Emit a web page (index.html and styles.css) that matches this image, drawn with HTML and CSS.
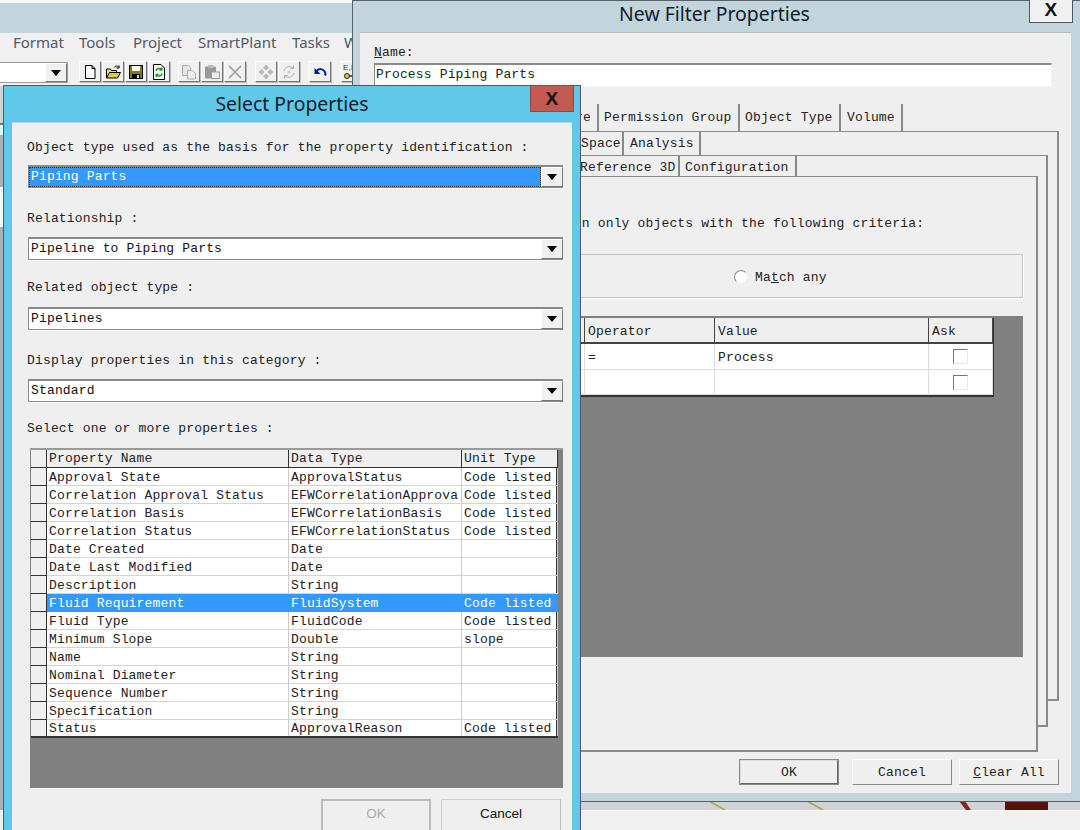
FILE: index.html
```html
<!DOCTYPE html>
<html lang="en">
<head>
<meta charset="utf-8">
<title>Select Properties</title>
<link rel="stylesheet" href="styles.css">
</head>
<body>
<div class="desktop">
  <main class="app">
    <div class="app-title"></div>
    <nav class="menu"><span class="m1">Format</span><span class="m2">Tools</span><span class="m3">Project</span><span class="m4">SmartPlant</span><span class="m5">Tasks</span><span class="m6">Window</span></nav>
    <div class="toolbar">
      <div class="tool-combo"><span class="arrow-btn"><i class="tri"></i></span></div>
      <div class="tool-group g1">
        <span class="tbtn"><svg viewBox="0 0 16 16"><path d="M3.500 1.500h6.500l3 3v10h-9.500z" fill="#fff" stroke="#000"/><path d="M10 1.500v3h3" fill="none" stroke="#000"/></svg></span>
        <span class="tbtn"><svg viewBox="0 0 16 16"><path d="M1.500 14V5h4l1 1.500h5V9" fill="#e8e060" stroke="#000"/><path d="M1.500 14l3-5.500h11l-3 5.500z" fill="#d8d040" stroke="#000"/><path d="M9 3.500c1.500-2 3.500-2 5 0M14 1.500v2.500h-2.500" fill="none" stroke="#000"/></svg></span>
        <span class="tbtn"><svg viewBox="0 0 16 16"><rect x="1.500" y="1.500" width="13" height="13" fill="#7a7a20" stroke="#000"/><rect x="4" y="2" width="8" height="5" fill="#fff"/><rect x="4" y="10" width="8" height="4.500" fill="#000"/><rect x="9" y="11" width="2" height="3" fill="#ddd"/></svg></span>
        <span class="tbtn"><svg viewBox="0 0 16 16"><path d="M2.500 .5h7.500l3.500 3.500v11.500h-11z" fill="#fff" stroke="#000"/><path d="M5 7a3.200 3.200 0 0 1 5.500-1.500M10.800 3.500v2.500h-2.500M11 9.500a3.200 3.200 0 0 1-5.500 1.500M5.200 13v-2.500h2.500" fill="none" stroke="#1a9a2a" stroke-width="1.500"/></svg></span>
      </div>
      <div class="tool-group g2">
        <span class="tbtn"><svg viewBox="0 0 16 16"><path d="M1.500 1.500h6l2 2v8h-8z" fill="#e4e4e4" stroke="#aaa"/><path d="M6.500 6.500h5l3 3v5.500h-8z" fill="#eee" stroke="#aaa"/></svg></span>
        <span class="tbtn"><svg viewBox="0 0 16 16"><rect x="1" y="2.500" width="11" height="12" rx="1" fill="#999"/><rect x="4" y="1" width="5" height="3" fill="#bbb"/><rect x="7.500" y="8" width="8" height="6.500" fill="#eee" stroke="#999"/></svg></span>
        <span class="tbtn"><svg viewBox="0 0 16 16"><path d="M2 2l12 12M14 2L2 14" stroke="#999" stroke-width="1.500" fill="none"/></svg></span>
      </div>
      <div class="tool-group g3">
        <span class="tbtn"><svg viewBox="0 0 16 16"><path d="M8 1l2.500 3-2.500 2-2.500-2zM8 15l2.500-3-2.500-2-2.500 2zM1 8l3-2.500 2 2.500-2 2.500zM15 8l-3-2.500-2 2.500 2 2.500z" fill="#bbb" stroke="#999" stroke-width=".5"/></svg></span>
        <span class="tbtn"><svg viewBox="0 0 16 16"><path d="M3 7a5.500 5.500 0 0 1 9-3M13 9a5.500 5.500 0 0 1-9 3M12.500 1.500v3h-3M3.500 14.500v-3h3" fill="none" stroke="#aaa"/><circle cx="8" cy="8" r="1.500" fill="#ccc"/></svg></span>
      </div>
      <div class="tool-group g4">
        <span class="tbtn"><svg viewBox="0 0 16 16"><path d="M4 7.500c3-3.500 7-3 9 .5 .6 1.200 .5 2.500 0 3.500" fill="none" stroke="#0a1a9a" stroke-width="2"/><path d="M2.500 4v6h6z" fill="#0a1a9a"/></svg></span>
      </div>
      <div class="tool-group g5">
        <span class="tbtn tbtn-clip"><span class="em">E,M</span><svg class="key" viewBox="0 0 16 8"><circle cx="4" cy="4" r="2.500" fill="#e8c820" stroke="#223"/><path d="M7 4h8" stroke="#223" stroke-width="1.500"/></svg></span>
      </div>
    </div>
    <div class="canvas">
      <svg class="scene" viewBox="0 0 1080 724" width="1080" height="724">
        <rect x="0" y="37" width="3" height="2" fill="#777"/>
        <rect x="0" y="39" width="3" height="10" fill="#dff8fa"/>
        <rect x="0" y="49" width="3" height="52" fill="#a8aebd"/>
        <rect x="0" y="101" width="3" height="40" fill="#f4f4f4"/>
        <rect x="0" y="141" width="3" height="600" fill="#a8aebd"/>
        <path d="M709 715l16 9M807 715l16 9" stroke="#a8a840" stroke-width="1.500" fill="none"/>
        <path d="M959 715l7 9h5l-6-9z" fill="#8a2020"/>
        <rect x="1005" y="715" width="43" height="9" fill="#5a1008"/>
      </svg>
    </div>
    <div class="status"></div>
  </main>

  <section class="filter-window">
    <header class="caption caption-filter"><h2>New Filter Properties</h2></header>
    <button class="close close-filter" type="button">X</button>
    <div class="filter-body">
      <div class="name-label"><u>N</u>ame:</div>
      <div class="name-input">Process Piping Parts</div>
      <div class="tabs tabs-1">
        <span class="tab t-a">Signature</span><span class="tab t-b">Permission Group</span><span class="tab t-c">Object Type</span><span class="tab t-d">Volume</span>
      </div>
      <div class="page page-1">
        <div class="tabs tabs-2">
          <span class="tab t-e">Space</span><span class="tab t-f">Analysis</span>
        </div>
        <div class="page page-2">
          <div class="tabs tabs-3">
            <span class="tab t-g">Reference 3D</span><span class="tab t-h">Configuration</span>
          </div>
          <div class="page page-3">
            <p class="criteria">Return only objects with the following criteria:</p>
            <div class="match-box"><span class="radio"></span><span>Ma<u>t</u>ch any</span></div>
            <div class="crit-area">
              <div class="crit-grid">
                <div class="ch">Property</div><div class="ch">Operator</div><div class="ch">Value</div><div class="ch">Ask</div>
                <div class="cc">Type</div><div class="cc">=</div><div class="cc">Process</div><div class="cc ask"><span class="check"></span></div>
                <div class="cc"></div><div class="cc"></div><div class="cc"></div><div class="cc ask"><span class="check"></span></div>
              </div>
            </div>
          </div>
        </div>
      </div>
      <div class="filter-buttons">
        <button class="btn btn-default" type="button">OK</button>
        <button class="btn" type="button">Cancel</button>
        <button class="btn" type="button"><u>C</u>lear All</button>
      </div>
    </div>
  </section>

  <section class="select-window">
    <header class="caption caption-select"><h1>Select Properties</h1></header>
    <button class="close close-select" type="button">X</button>
    <div class="select-body">
      <label class="lbl l1">Object type used as the basis for the property identification :</label>
      <div class="combo c1"><span class="combo-text selected">Piping Parts</span><span class="arrow-btn"><i class="tri"></i></span></div>
      <label class="lbl l2">Relationship :</label>
      <div class="combo c2"><span class="combo-text">Pipeline to Piping Parts</span><span class="arrow-btn"><i class="tri"></i></span></div>
      <label class="lbl l3">Related object type :</label>
      <div class="combo c3"><span class="combo-text">Pipelines</span><span class="arrow-btn"><i class="tri"></i></span></div>
      <label class="lbl l4">Display properties in this category :</label>
      <div class="combo c4"><span class="combo-text">Standard</span><span class="arrow-btn"><i class="tri"></i></span></div>
      <label class="lbl l5">Select one or more properties :</label>
      <div class="prop-area">
        <div class="prop-grid">
          <div class="hd"></div><div class="hd">Property Name</div><div class="hd">Data Type</div><div class="hd">Unit Type</div>
          <div class="rh"></div><div>Approval State</div><div>ApprovalStatus</div><div>Code listed</div>
          <div class="rh"></div><div>Correlation Approval Status</div><div>EFWCorrelationApprova</div><div>Code listed</div>
          <div class="rh"></div><div>Correlation Basis</div><div>EFWCorrelationBasis</div><div>Code listed</div>
          <div class="rh"></div><div>Correlation Status</div><div>EFWCorrelationStatus</div><div>Code listed</div>
          <div class="rh"></div><div>Date Created</div><div>Date</div><div></div>
          <div class="rh"></div><div>Date Last Modified</div><div>Date</div><div></div>
          <div class="rh"></div><div>Description</div><div>String</div><div></div>
          <div class="rh"></div><div class="sel">Fluid Requirement</div><div class="sel">FluidSystem</div><div class="sel">Code listed</div>
          <div class="rh"></div><div>Fluid Type</div><div>FluidCode</div><div>Code listed</div>
          <div class="rh"></div><div>Minimum Slope</div><div>Double</div><div>slope</div>
          <div class="rh"></div><div>Name</div><div>String</div><div></div>
          <div class="rh"></div><div>Nominal Diameter</div><div>String</div><div></div>
          <div class="rh"></div><div>Sequence Number</div><div>String</div><div></div>
          <div class="rh"></div><div>Specification</div><div>String</div><div></div>
          <div class="rh"></div><div>Status</div><div>ApprovalReason</div><div>Code listed</div>
        </div>
      </div>
      <div class="select-buttons">
        <button class="sbtn sbtn-off" type="button">OK</button>
        <button class="sbtn" type="button">Cancel</button>
      </div>
    </div>
  </section>
</div>
</body>
</html>
```
FILE: styles.css
```css
* { box-sizing: border-box; }
html, body { margin: 0; height: 100%; overflow: hidden; }
.desktop {
  position: relative;
  width: 1080px;
  height: 830px;
  overflow: hidden;
  background: #fbfbfb;
  font-family: "Liberation Mono", "DejaVu Sans Mono", monospace;
  font-size: 13px;
  letter-spacing: .16px;
  color: #222;
}
button { font-family: inherit; font-size: inherit; letter-spacing: inherit; color: inherit; padding: 0; margin: 0; }
h1, h2, p { margin: 0; font-weight: 400; }

/* Background application */
.app { display: flex; flex-direction: column; height: 830px; }
.app-title { height: 30px; margin-top: 3px; background: #c3d5dc; }
.menu {
  height: 25px;
  display: flex;
  align-items: center;
  background: #f0f0f0;
  font-family: "Noto Sans", sans-serif;
  font-size: 15px;
  letter-spacing: 0;
  color: #4e5a66;
  white-space: nowrap;
  padding: 0 0 7px 13px;
}
.m1 { width: 66px; } .m2 { width: 54px; } .m3 { width: 65px; } .m4 { width: 94px; } .m5 { width: 52px; }
.toolbar { height: 28px; display: flex; align-items: flex-start; padding-top: 3px; background: #f0f0f0; position: relative; }
.tool-combo {
  width: 68px; height: 21px; margin-top: 1px;
  background: #fff;
  border: 1px solid #999; border-left: 0;
  display: flex; justify-content: flex-end;
}
.tool-group { display: flex; gap: 1px; }
.g1 { margin-left: 11px; } .g2 { margin-left: 8px; } .g3 { margin-left: 9px; } .g4 { margin-left: 9px; } .g5 { margin-left: 10px; }
.tbtn {
  width: 22px; height: 21px;
  display: flex; align-items: center; justify-content: center;
  background: #f0f0f0;
  border: 1px solid; border-color: #fff #777 #777 #fff;
  box-shadow: 1px 1px 0 #bbb;
}
.tbtn svg { width: 16px; height: 16px; }
.tbtn-clip { flex-direction: column; font: 8px/9px "Liberation Sans", sans-serif; color: #333; align-items: flex-start; padding-left: 1px; }
.tbtn-clip .key { width: 16px; height: 8px; }
.canvas { height: 724px; background: #d1d2d5; flex: 0 0 auto; overflow: hidden; }
.scene { display: block; }
.status { flex: 1; background: #f0f0f0; border-top: 1px solid #fff; }

.arrow-btn {
  flex: 0 0 22px;
  width: 22px; height: 100%;
  display: flex; align-items: center; justify-content: center;
  background: #f0f0f0;
  border: 1px solid; border-color: #fff #777 #777 #fff;
}
.tri { width: 0; height: 0; border: 5px solid transparent; border-top: 6px solid #000; border-bottom: 0; }

/* Captions */
.caption { display: flex; align-items: center; justify-content: center; font-family: "Noto Sans", sans-serif; letter-spacing: 0; color: #10202c; }
.close {
  position: absolute;
  display: flex; align-items: center; justify-content: center;
  font-family: "Liberation Sans", sans-serif;
  font-weight: 700; font-size: 19px; color: #111;
}

/* New Filter Properties */
.filter-window {
  position: absolute;
  left: 352px; top: 0; width: 740px; height: 802px;
  background: #c3d5dc;
  border: 1px solid #5a6066;
  padding: 0 20px 8px 7px;
  display: flex; flex-direction: column;
}
.caption-filter { height: 31px; padding: 0 2px 6px 0; }
.caption-filter h2 { font-size: 19.400px; }
.close-filter {
  left: 676px; top: -3px; width: 44px; height: 25px;
  background: #f0f0f0;
  border: 1px solid #556;
  border-top: 0;
}
.filter-body { flex: 1; background: #efefef; padding: 12px 13px 0 14px; border-top: 1px solid #aebfc6; position: relative; }
.name-label { height: 18px; line-height: 16px; }
.name-input {
  width: 678px; height: 24px; line-height: 20px; padding-left: 1px;
  background: #fff;
  border: 2px solid; border-color: #8a8a8a #f4f4f4 #f4f4f4 #8a8a8a;
  border-width: 2px 1px 1px 1px;
}
.tabs { display: flex; white-space: nowrap; }
.tab { border-right: 2px solid #888; padding-left: 5px; line-height: 24px; height: 100%; }
.tabs-1 { height: 27px; margin-top: 17px; padding-left: 91px; align-items: flex-end; }
.tabs-1 .tab { line-height: 28px; }
.t-a { width: 134px; text-align: right; padding-right: 6px; }
.t-b { width: 141px; } .t-c { width: 101px; } .t-d { width: 62px; padding-left: 6px; }
.page { border: solid #8a8a8a; border-width: 1px 2px 2px 0; background: #efefef; }
.page-1 { height: 570px; width: 685px; }
.tabs-2 { height: 23px; padding-left: 202px; }
.t-e { width: 48px; text-align: right; padding-right: 8px; } .t-f { width: 77px; padding-left: 6px; }
.page-2 { height: 572px; width: 674px; }
.tabs-3 { height: 20px; padding-left: 201px; }
.t-g { width: 105px; text-align: right; padding-right: 8px; } .t-h { width: 117px; }
.page-3 { height: 576px; width: 664px; position: relative; }
.criteria { position: absolute; left: 168px; top: 39px; white-space: nowrap; }
.crit-area, .match-box { position: absolute; }
.match-box {
  left: 40px; top: 77px; width: 609px; height: 44px;
  border: 1px solid #c4c4c4; box-shadow: 1px 1px 0 #fff;
  display: flex; align-items: center; padding: 2px 0 0 319px; gap: 7px;
}
.radio { width: 14px; height: 14px; border-radius: 50%; background: #fff; border: 1px solid #aaa; border-color: #888 #eee #eee #888; }
.crit-area { left: 40px; top: 139px; width: 609px; height: 341px; background: #808080; }
.crit-grid {
  display: grid;
  grid-template-columns: 171px 130px 214px 64px;
  grid-template-rows: 26px 26px 25px;
  width: 580px; margin-top: 2px; background: #fff;
  border-bottom: 2px solid #333; border-right: 1px solid #333;
}
.ch { background: #efefef; border-right: 1px solid #444; border-bottom: 2px solid #444; padding-left: 3px; line-height: 27px; }
.cc { border-right: 1px solid #ddd; border-bottom: 1px solid #ddd; padding-left: 3px; line-height: 27px; background: #fff; }
.ask { display: flex; align-items: center; justify-content: center; padding: 0; }
.check { width: 15px; height: 15px; background: #fff; border: 1px solid; border-color: #777 #e8e8e8 #e8e8e8 #777; }
.filter-buttons { display: flex; justify-content: flex-end; position: absolute; left: 379px; top: 726px; }
.btn {
  width: 100px; height: 26px; margin-right: 13px;
  background: #efefef;
  border: 1px solid; border-color: #fff #888 #888 #fff;
}
.btn:last-child { margin-right: 0; margin-left: -6px; }
.btn-default { border: 2px solid; border-color: #ddd #666 #666 #ddd; outline: 1px solid #888; outline-offset: -1px; }

/* Select Properties */
.select-window {
  position: absolute;
  left: 3px; top: 85px; width: 578px; height: 760px;
  background: #62c8ea;
  border: 1px solid #4a5a66;
  border-width: 1px 1px 0 1px;
  padding: 0 8px;
  display: flex; flex-direction: column;
}
.caption-select { height: 36px; padding-bottom: 1px; }
.caption-select h1 { font-size: 19.400px; }
.close-select { left: 526px; top: -1px; width: 44px; height: 27px; background: #c25a50; border: 1px solid #8d4a44; }
.select-body { flex: 1; background: #efefef; padding: 16px 9px 0 16px; border-top: 1px solid #aed8e6; }
.lbl { display: block; height: 18px; line-height: 18px; white-space: nowrap; margin-left: -1px; }
.combo {
  display: flex; height: 23px; width: 535px;
  background: #fff;
  border: solid #8a8a8a; border-width: 2px 0 1px 1px;
  box-shadow: 0 1px 0 #fafafa;
}
.combo-text { flex: 1; padding-left: 2px; line-height: 20px; color: #111; }
.combo-text.selected { background: #3399ff; color: #fff; outline: 1px dotted #333; outline-offset: -1px; }
.c1 { margin-top: 8px; }
.l2 { margin-top: 22px; } .c2 { margin-top: 9px; }
.l3 { margin-top: 19px; } .c3 { margin-top: 10px; }
.l4 { margin-top: 22px; } .c4 { margin-top: 9px; }
.l5 { margin-top: 18px; }
.prop-area {
  width: 533px; height: 340px; margin: 10px 0 0 2px;
  background: #808080;
  border-top: 2px solid #9a9a9a;
  box-shadow: 0 1px 0 #fafafa;
}
.prop-grid {
  display: grid;
  grid-template-columns: 16px 242px 173px 96px;
  grid-template-rows: repeat(15, 18px) 16px;
  width: 527px;
  margin-left: 1px;
  background: #fff;
  border-bottom: 2px solid #333;
  border-right: 2px solid #333;
}
.prop-grid > div {
  border-right: 1px solid #ccc; border-bottom: 1px solid #d4d4d4;
  padding-left: 2px; line-height: 19px;
  white-space: nowrap; overflow: hidden;
}
.prop-grid > div:nth-last-child(-n+4) { border-bottom: 0; line-height: 18px; }
.prop-grid > .hd { background: #efefef; border-right: 1px solid #333; border-bottom: 1px solid #333; line-height: 18px; }
.prop-grid > .rh { background: #efefef; border-right: 1px solid #333; border-bottom: 1px solid #333; padding: 0; }
.prop-grid > .sel { background: #3399ff; color: #fff; border-color: #3399ff; }
.select-buttons { display: flex; gap: 10px; margin: 11px 0 0 293px; }
.sbtn {
  width: 110px; height: 40px;
  background: #efefef;
  border: 1px solid; border-color: #cfcfcf #bbb #bbb #cfcfcf;
  font-family: "Liberation Sans", sans-serif;
  font-size: 13.500px;
  letter-spacing: 0;
  padding-bottom: 12px;
  color: #111;
}
.sbtn + .sbtn { width: 120px; }
.sbtn-off { color: #aaa; border: 2px solid #bbb; }
```
